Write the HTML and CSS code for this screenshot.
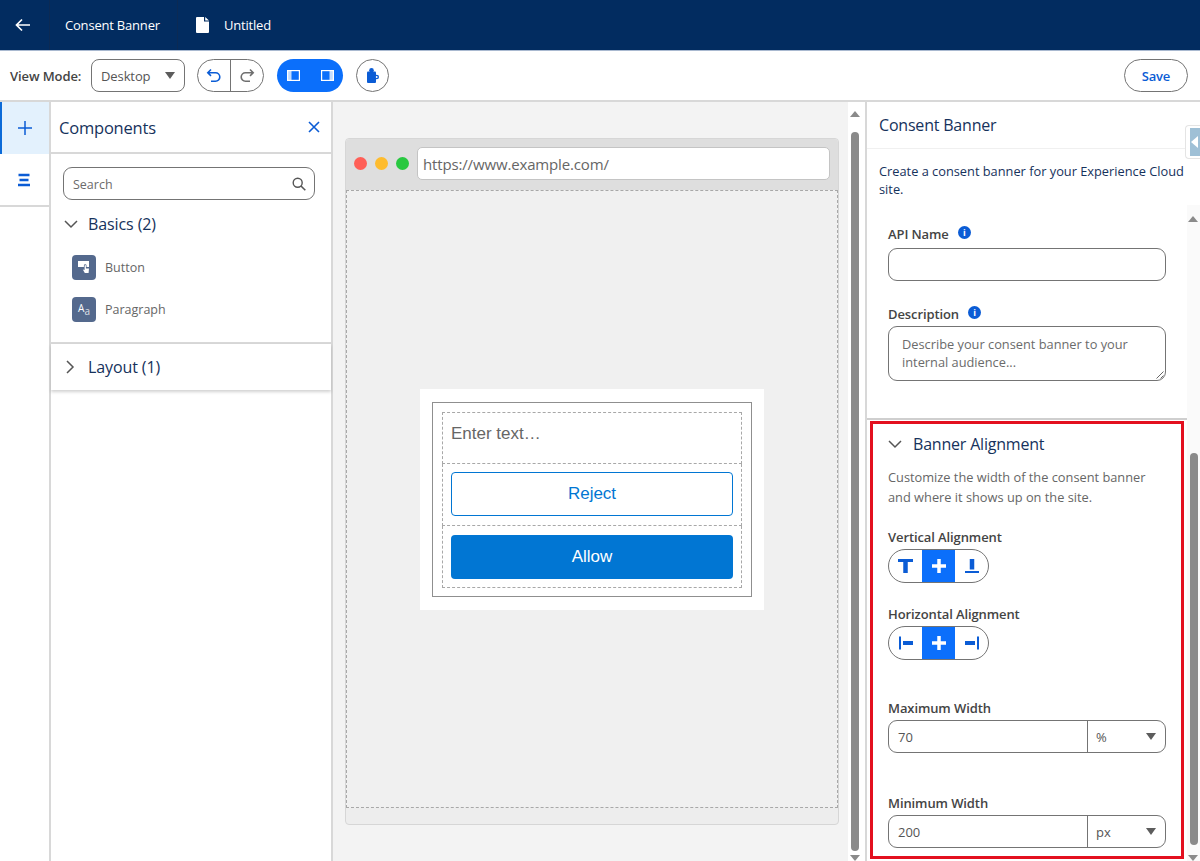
FILE: index.html
```html
<!DOCTYPE html>
<html lang="en">
<head>
  <meta charset="UTF-8">
  <title>Consent Banner</title>
  <link rel="stylesheet" href="styles.css">
</head>
<body>

  <!-- TOP BAR -->
  <header class="top-bar">
    <div class="top-cell back-cell">
      <svg width="16" height="14" viewBox="0 0 16 14"><path d="M15 7H2M7 1.500 1.500 7 7 12.500" fill="none" stroke="#fff" stroke-width="1.700"/></svg>
    </div>
    <div class="top-cell title-cell">Consent Banner</div>
    <div class="top-cell doc-cell">
      <svg width="13" height="16" viewBox="0 0 13 16"><path d="M1 0h7v4.500h5V15a1 1 0 0 1-1 1H1a1 1 0 0 1-1-1V1a1 1 0 0 1 1-1zM9.200 0 13 3.500H9.200z" fill="#fff"/></svg>
      <span>Untitled</span>
    </div>
  </header>

  <!-- TOOLBAR -->
  <div class="toolbar">
    <span class="view-label">View Mode:</span>
    <div class="select-box view-select">Desktop <i class="caret"></i></div>
    <div class="undo-group">
      <span class="undo-btn">
        <svg width="16" height="16" viewBox="0 0 16 16"><path d="M5 1.500 1.800 4.700 5 7.900M2 4.700h7.500a4.300 4.300 0 0 1 0 8.600H5" fill="none" stroke="#0b5cd5" stroke-width="1.600"/></svg>
      </span>
      <span class="undo-btn">
        <svg width="16" height="16" viewBox="0 0 16 16"><path d="M11 1.500l3.200 3.200L11 7.900M14 4.700H6.500a4.300 4.300 0 0 0 0 8.600H11" fill="none" stroke="#6f6f6f" stroke-width="1.600"/></svg>
      </span>
    </div>
    <div class="panel-pill">
      <svg width="13" height="11" viewBox="0 0 13 11"><rect x=".6" y=".6" width="11.800" height="9.800" fill="none" stroke="#fff" stroke-width="1.200"/><rect width="4.500" height="11" fill="#fff" opacity=".75"/></svg>
      <svg width="13" height="11" viewBox="0 0 13 11"><rect x=".6" y=".6" width="11.800" height="9.800" fill="none" stroke="#fff" stroke-width="1.200"/><rect x="8.500" width="4.500" height="11" fill="#fff" opacity=".75"/></svg>
    </div>
    <div class="round-btn">
      <svg width="12" height="15" viewBox="0 0 12 15"><rect y="3.500" width="9" height="11.500" rx="1" fill="#0b5cd5"/><circle cx="4.500" cy="2.300" r="2.300" fill="#0b5cd5"/><circle cx="9.700" cy="9" r="2.300" fill="#0b5cd5"/><circle cx="9.700" cy="9" r=".9" fill="#fff"/></svg>
    </div>
    <button class="save-btn">Save</button>
  </div>

  <main class="workspace">

    <!-- ICON RAIL -->
    <nav class="rail">
      <div class="rail-item rail-active">
        <svg width="14" height="14" viewBox="0 0 14 14"><path d="M7 0v14M0 7h14" stroke="#0b5cd5" stroke-width="1.500"/></svg>
      </div>
      <div class="rail-item">
        <svg width="14" height="14" viewBox="0 0 14 14"><path d="M1.500 2h11M2.500 7h9M1 12h12" stroke="#0b5cd5" stroke-width="2.400"/></svg>
      </div>
    </nav>

    <!-- COMPONENTS -->
    <aside class="components">
      <div class="comp-head">
        <span>Components</span>
        <svg width="12" height="12" viewBox="0 0 12 12"><path d="M1 1l10 10M11 1 1 11" stroke="#0b5cd5" stroke-width="1.600"/></svg>
      </div>
      <div class="comp-body">
        <div class="search-box">
          <span>Search</span>
          <svg width="14" height="14" viewBox="0 0 14 14"><circle cx="5.700" cy="5.700" r="4.500" fill="none" stroke="#555" stroke-width="1.400"/><path d="M9 9l4.300 4.300" stroke="#555" stroke-width="1.600"/></svg>
        </div>
        <div class="group-row basics-row">
          <svg width="14" height="9" viewBox="0 0 14 9"><path d="M1 1l6 6 6-6" fill="none" stroke="#555" stroke-width="1.500"/></svg>
          <span>Basics (2)</span>
        </div>
        <div class="comp-item">
          <span class="comp-icon">
            <svg width="14" height="14" viewBox="0 0 14 14"><path d="M1 1h11v6H9.500V5.500a1.300 1.300 0 0 0-2.600 0V7H1z" fill="#fff"/><path d="M7.600 5.500a.7.7 0 0 1 1.300 0v3h3.100l-.4 4.500H7.800L5.800 9.500l1.800.6z" fill="#fff"/></svg>
          </span>
          <span>Button</span>
        </div>
        <div class="comp-item">
          <span class="comp-icon comp-icon-text">A<small>a</small></span>
          <span>Paragraph</span>
        </div>
      </div>
      <div class="group-row layout-row">
        <svg width="9" height="14" viewBox="0 0 9 14"><path d="M1 1l6 6-6 6" fill="none" stroke="#555" stroke-width="1.500"/></svg>
        <span>Layout (1)</span>
      </div>
    </aside>

    <!-- CANVAS -->
    <section class="canvas">
      <div class="browser">
        <div class="browser-bar">
          <i class="dot dot-red"></i>
          <i class="dot dot-yellow"></i>
          <i class="dot dot-green"></i>
          <div class="url-box">https://www.example.com/</div>
        </div>
        <div class="browser-page">
          <div class="banner-card">
            <div class="banner-frame">
              <div class="slot slot-text">Enter text…</div>
              <div class="slot"><div class="banner-btn btn-outline">Reject</div></div>
              <div class="slot"><div class="banner-btn btn-solid">Allow</div></div>
            </div>
          </div>
        </div>
      </div>
    </section>

    <div class="scroll-col">
      <i class="arrow-up"></i>
      <div class="thumb"></div>
      <i class="arrow-down"></i>
    </div>

    <!-- PROPERTIES -->
    <aside class="props">
      <div class="props-head">Consent Banner</div>
      <p class="props-intro">Create a consent banner for your Experience Cloud site.</p>

      <div class="field api-field">
        <label class="field-label">API Name <i class="info">i</i></label>
        <div class="text-input"></div>
      </div>
      <div class="field desc-field">
        <label class="field-label">Description <i class="info">i</i></label>
        <div class="text-area">Describe your consent banner to your internal audience...
          <svg class="grip" width="8" height="8" viewBox="0 0 8 8"><path d="M7.500 .5l-7 7M7.500 4.500l-3 3" stroke="#666"/></svg>
        </div>
      </div>

      <div class="props-rule"></div>

      <section class="align-section">
        <div class="align-head">
          <svg width="14" height="9" viewBox="0 0 14 9"><path d="M1 1l6 6 6-6" fill="none" stroke="#555" stroke-width="1.500"/></svg>
          <span>Banner Alignment</span>
        </div>
        <p class="align-help">Customize the width of the consent banner and where it shows up on the site.</p>

        <div class="field-label seg-label">Vertical Alignment</div>
        <div class="seg-group">
          <span class="seg"><svg width="15" height="14" viewBox="0 0 15 14"><path d="M0 1.500h15" stroke="#0b5cd5" stroke-width="3"/><path d="M7.500 2v12" stroke="#0b5cd5" stroke-width="4.500"/></svg></span>
          <span class="seg seg-on"><svg width="14" height="14" viewBox="0 0 14 14"><path d="M7 0v14M0 7h14" stroke="#fff" stroke-width="3.500"/></svg></span>
          <span class="seg"><svg width="14" height="14" viewBox="0 0 14 14"><path d="M7 0v10.500" stroke="#0b5cd5" stroke-width="4.500"/><path d="M0 13h14" stroke="#0b5cd5" stroke-width="2"/></svg></span>
        </div>

        <div class="field-label seg-label seg-label-2">Horizontal Alignment</div>
        <div class="seg-group">
          <span class="seg"><svg width="14" height="14" viewBox="0 0 14 14"><path d="M1 .5v13" stroke="#0b5cd5" stroke-width="2"/><path d="M4 7h10" stroke="#0b5cd5" stroke-width="4"/></svg></span>
          <span class="seg seg-on"><svg width="14" height="14" viewBox="0 0 14 14"><path d="M7 0v14M0 7h14" stroke="#fff" stroke-width="3.500"/></svg></span>
          <span class="seg"><svg width="14" height="14" viewBox="0 0 14 14"><path d="M13 .5v13" stroke="#0b5cd5" stroke-width="2"/><path d="M0 7h10" stroke="#0b5cd5" stroke-width="4"/></svg></span>
        </div>

        <div class="field-label width-label">Maximum Width</div>
        <div class="width-row">
          <div class="width-value">70</div>
          <div class="width-unit">% <i class="caret"></i></div>
        </div>

        <div class="field-label width-label width-label-2">Minimum Width</div>
        <div class="width-row">
          <div class="width-value">200</div>
          <div class="width-unit">px <i class="caret"></i></div>
        </div>
      </section>

      <div class="props-scroll">
        <i class="arrow-up"></i>
        <div class="thumb props-thumb"></div>
        <i class="arrow-down"></i>
      </div>
      <div class="side-tab"><i></i></div>
    </aside>

  </main>

</body>
</html>
```
FILE: styles.css
```css
* {
  box-sizing: border-box;
}

html, body {
  height: 100%;
}

body {
  margin: 0;
  height: 861px;
  overflow: hidden;
  background-color: white;
  font-family: "Open Sans", "Noto Sans", sans-serif;
  font-size: 13px;
  color: #16325c;
  display: flex;
  flex-direction: column;
}

i {
  font-style: normal;
}

/* top bar */
.top-bar {
  height: 51px;
  flex: none;
  display: flex;
  background-color: #022c60;
  color: white;
  border-bottom: 1px solid #a9b9d0;
}

.top-cell {
  display: flex;
  align-items: center;
  border-right: 1px solid #0b2a54;
}

.back-cell {
  width: 50px;
  padding-left: 15px;
}

.title-cell {
  width: 128px;
  padding-left: 15px;
  padding-bottom: 1px;
  letter-spacing: -0.2px;
}

.doc-cell {
  border: none;
  padding-left: 18px;
  gap: 15px;
  letter-spacing: -0.2px;
}

/* toolbar */
.toolbar {
  height: 51px;
  flex: none;
  display: flex;
  align-items: center;
  padding: 0 12px 0 10px;
  border-bottom: 2px solid #d8d8d8;
}

.view-label {
  color: #444;
  font-weight: 600;
  font-size: 13px;
  letter-spacing: -0.1px;
  width: 81px;
}

.select-box {
  height: 33px;
  border: 1px solid #747474;
  border-radius: 8px;
  display: flex;
  align-items: center;
  justify-content: space-between;
  color: #555;
}

.view-select {
  width: 94px;
  padding: 0 9px 0 9px;
  letter-spacing: -0.1px;
}

.caret {
  width: 0;
  height: 0;
  border-left: 5.500px solid transparent;
  border-right: 5.500px solid transparent;
  border-top: 7px solid #5c5c5c;
}

.undo-group {
  margin-left: 12px;
  width: 67px;
  height: 33px;
  display: flex;
  border: 1px solid #747474;
  border-radius: 17px;
}

.undo-btn {
  flex: 1;
  display: flex;
  align-items: center;
  justify-content: center;
}

.undo-btn + .undo-btn {
  border-left: 1px solid #747474;
}

.panel-pill {
  margin-left: 13px;
  width: 66px;
  height: 33px;
  border-radius: 17px;
  background-color: #0b6ffb;
  display: flex;
  align-items: center;
  justify-content: space-between;
  padding: 0 9px 0 10px;
}

.round-btn {
  margin-left: 13px;
  width: 33px;
  height: 33px;
  border: 1px solid #747474;
  border-radius: 50%;
  display: flex;
  align-items: center;
  justify-content: center;
}

.save-btn {
  margin-left: auto;
  width: 64px;
  height: 33px;
  border: 1px solid #747474;
  border-radius: 17px;
  background-color: white;
  color: #0b5cd5;
  font: 600 13px "Open Sans", sans-serif;
  letter-spacing: -0.2px;
}

/* main area */
.workspace {
  flex: 1;
  display: flex;
  min-height: 0;
}

.rail {
  width: 51px;
  flex: none;
  border-right: 2px solid #d8d8d8;
}

.rail-item {
  height: 53px;
  display: flex;
  align-items: center;
  justify-content: center;
  border-bottom: 2px solid #d8d8d8;
  padding-right: 1px;
}

.rail-active {
  height: 52px;
  background-color: #e3f1fd;
  border-left: 2px solid #0b6ad8;
  border-bottom: none;
}

/* components panel */
.components {
  width: 282px;
  flex: none;
  border-right: 2px solid #d8d8d8;
  align-self: stretch;
}

.comp-head {
  height: 52px;
  display: flex;
  align-items: center;
  justify-content: space-between;
  padding: 0 11px 0 8px;
  font-size: 16.500px;
  letter-spacing: -0.2px;
  border-bottom: 2px solid #d8d8d8;
}

.comp-body {
  height: 190px;
  padding: 13px 16px 0 12px;
  border-bottom: 2px solid #d8d8d8;
}

.search-box {
  height: 33px;
  border: 1px solid #747474;
  border-radius: 9px;
  display: flex;
  align-items: center;
  justify-content: space-between;
  padding: 1px 8px 0 9px;
  color: #6b6b6b;
  font-size: 12.500px;
}

.group-row {
  display: flex;
  align-items: center;
  font-size: 16px;
  letter-spacing: -0.1px;
}

.basics-row {
  margin-top: 10px;
  height: 28px;
  gap: 10px;
  padding-left: 1px;
}

.layout-row {
  height: 46px;
  padding: 0 0 0 15px;
  gap: 13px;
  box-shadow: 0 2px 3px rgba(0,0,0,0.18);
}

.comp-item {
  display: flex;
  align-items: center;
  gap: 9px;
  color: #666;
  font-size: 12.500px;
  height: 42px;
  padding-left: 9px;
}

.basics-row + .comp-item {
  margin-top: 8px;
}

.comp-icon {
  width: 24px;
  height: 25px;
  border-radius: 4px;
  background-color: #54698d;
  display: flex;
  align-items: center;
  justify-content: center;
  color: white;
}

.comp-icon-text {
  font-size: 10px;
  padding-bottom: 3px;
}

.comp-icon-text small {
  font-size: 10px;
  margin-top: 6px;
  opacity: 0.8;
}

/* canvas */
.canvas {
  width: 515px;
  flex: none;
  background-color: #f3f3f3;
  padding: 36px 9px 35px 12px;
}

.browser {
  height: 687px;
  border: 1px solid #d6d6d6;
  border-radius: 4px;
  background-color: #ededed;
  display: flex;
  flex-direction: column;
  padding-bottom: 16px;
}

.browser-bar {
  height: 51px;
  flex: none;
  background-color: #dedede;
  border-radius: 4px 4px 0 0;
  display: flex;
  align-items: center;
  gap: 8px;
  padding: 0 8px 3px 8px;
}

.dot {
  width: 13px;
  height: 13px;
  border-radius: 50%;
  flex: none;
}

.dot-red { background-color: #ff5f57; }
.dot-yellow { background-color: #febc2e; }
.dot-green { background-color: #28c840; }

.url-box {
  flex: 1;
  height: 33px;
  background-color: white;
  border: 1px solid #c4c4c4;
  border-radius: 5px;
  display: flex;
  align-items: center;
  padding: 2px 0 0 5px;
  color: #666;
  font-size: 15px;
  letter-spacing: -0.15px;
}

.browser-page {
  flex: 1;
  border: 1px dashed #a8a8a8;
  background-color: #f0f0f0;
  display: flex;
  align-items: center;
  justify-content: center;
}

.banner-card {
  width: 344px;
  height: 221px;
  background-color: white;
  padding: 13px 12px;
}

.banner-frame {
  height: 195px;
  border: 1px solid #8f8f8f;
  padding: 9px;
  font-family: "Liberation Sans", Arial, sans-serif;
  font-size: 17px;
}

.slot {
  height: 62px;
  border: 1px dashed #a8a8a8;
  padding: 9px 8px;
}

.slot + .slot {
  border-top: none;
}

.slot:first-child {
  height: 52px;
  padding: 11px 8px;
  color: #666;
}

.banner-btn {
  height: 44px;
  border-radius: 4px;
  display: flex;
  align-items: center;
  justify-content: center;
}

.btn-outline {
  margin-top: -1px;
  border: 1px solid #0176d3;
  color: #0176d3;
}

.btn-solid {
  background-color: #0176d3;
  color: white;
}

/* scrollbars */
.scroll-col {
  width: 19px;
  flex: none;
  position: relative;
  background-color: white;
  border-right: 2px solid #d8d8d8;
}

.thumb {
  position: absolute;
  top: 30px;
  left: 3px;
  width: 8px;
  bottom: 10px;
  background-color: #8a8a8a;
  border-radius: 4px;
}

.arrow-up, .arrow-down {
  position: absolute;
  left: 2px;
  width: 0;
  height: 0;
  border-left: 5px solid transparent;
  border-right: 5px solid transparent;
}

.arrow-up {
  top: 9px;
  border-bottom: 6px solid #8a8a8a;
}

.arrow-down {
  bottom: 0;
  border-top: 6px solid #8a8a8a;
}

/* properties panel */
.props {
  flex: 1;
  position: relative;
  min-width: 0;
}

.props-head {
  height: 47px;
  padding: 12px 0 0 12px;
  font-size: 16px;
  letter-spacing: -0.2px;
  border-bottom: 1px solid #f0f0f0;
}

.props-intro {
  margin: 13px 0 0 12px;
  width: 312px;
  line-height: 18px;
  font-size: 12.800px;
}

.field {
  margin-left: 21px;
  width: 278px;
}

.api-field {
  margin-top: 27px;
}

.desc-field {
  margin-top: 24px;
}

.field-label {
  display: flex;
  align-items: center;
  gap: 7px;
  color: #444;
  font-weight: 600;
  font-size: 13px;
  letter-spacing: -0.1px;
  height: 18px;
}

.info {
  width: 13px;
  height: 13px;
  margin-bottom: 3px;
  margin-left: 2px;
  border-radius: 50%;
  background-color: #0b5cd5;
  color: white;
  font-size: 9px;
  font-weight: 700;
  line-height: 13px;
  text-align: center;
}

.text-input {
  margin-top: 5px;
  height: 33px;
  border: 1px solid #747474;
  border-radius: 9px;
}

.text-area {
  position: relative;
  margin-top: 3px;
  height: 55px;
  padding: 8px 13px;
  border: 1px solid #747474;
  border-radius: 9px;
  color: #6b6b6b;
  font-size: 12.800px;
  line-height: 18px;
}

.grip {
  position: absolute;
  right: 1px;
  bottom: 1px;
}

.props-rule {
  margin-top: 37px;
  width: 320px;
  height: 2px;
  background-color: #cfcfcf;
}

.align-section {
  margin: 1px 0 0 3px;
  width: 314px;
  height: 438px;
  border: 3px solid #e3101f;
  padding: 7px 0 0 15px;
}

.align-head {
  display: flex;
  align-items: center;
  gap: 11px;
  height: 26px;
  font-size: 16px;
  letter-spacing: -0.2px;
}

.align-help {
  margin: 10px 0 0 0;
  width: 275px;
  color: #666;
  font-size: 12.800px;
  line-height: 20px;
}

.seg-label {
  margin-top: 21px;
}

.seg-label-2 {
  margin-top: 22px;
}

.seg-group {
  margin-top: 3px;
  width: 101px;
  height: 34px;
  border: 1px solid #747474;
  border-radius: 17px;
  display: flex;
  overflow: hidden;
}

.seg {
  flex: 1;
  display: flex;
  align-items: center;
  justify-content: center;
}

.seg-on {
  background-color: #0b6ffb;
}

.width-label {
  margin-top: 39px;
}

.width-label-2 {
  margin-top: 41px;
}

.width-row {
  margin-top: 3px;
  width: 278px;
  height: 33px;
  border: 1px solid #747474;
  border-radius: 9px;
  display: flex;
  color: #555;
}

.width-value {
  width: 199px;
  padding-left: 9px;
  display: flex;
  align-items: center;
  border-right: 1px solid #747474;
}

.width-unit {
  flex: 1;
  display: flex;
  align-items: center;
  justify-content: space-between;
  padding: 0 9px 0 8px;
}

.props-scroll {
  position: absolute;
  top: 103px;
  right: 0;
  bottom: 0;
  width: 13px;
  background-color: #fafafa;
}

.props-scroll .arrow-up {
  left: 1px;
  top: 11px;
}

.props-scroll .arrow-down {
  left: 1px;
}

.props-thumb {
  top: 248px;
  left: 3px;
  bottom: 16px;
}

.side-tab {
  position: absolute;
  top: 23px;
  right: 0;
  width: 15px;
  height: 34px;
  padding: 2px 0 2px 4px;
  background-color: white;
  border: 1px solid #e4e4e4;
  border-right: none;
  border-radius: 4px 0 0 4px;
}

.side-tab i {
  display: flex;
  align-items: center;
  height: 100%;
  background-color: #9fc0d6;
}

.side-tab i::before {
  content: "";
  border-top: 6px solid transparent;
  border-bottom: 6px solid transparent;
  border-right: 7px solid white;
  margin-left: 1px;
}
```
